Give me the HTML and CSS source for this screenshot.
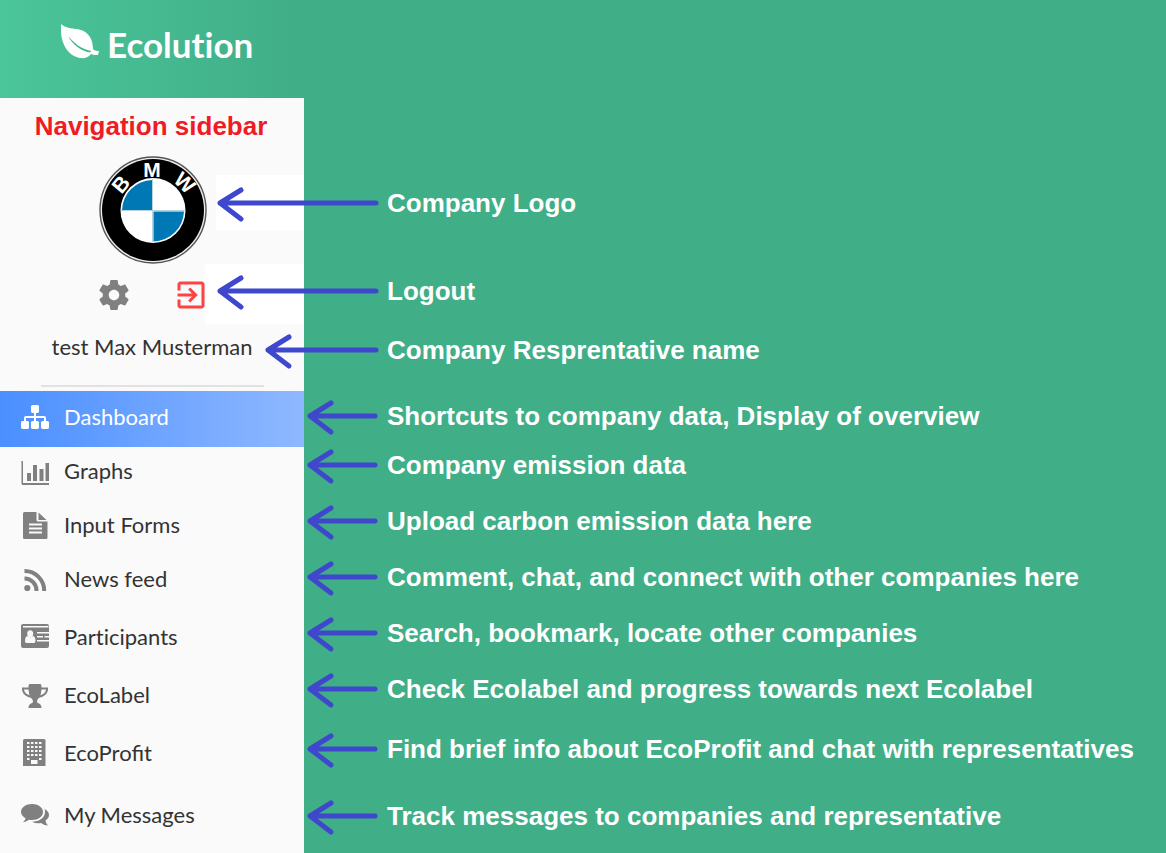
FILE: index.html
```html
<!DOCTYPE html>
<html lang="en">
<head>
<meta charset="utf-8">
<meta name="viewport" content="width=device-width, initial-scale=1">
<title>Ecolution – Navigation sidebar</title>
<link rel="stylesheet" href="styles.css">
</head>
<body>
<svg width="0" height="0" class="defs" aria-hidden="true">
  <symbol id="arrow" viewBox="0 0 74 34" overflow="visible"><path d="M26 4 5 17 26 33M5 17H70" /></symbol>
</svg>
<header class="header">
  <div class="brand">
    <svg class="leaf" viewBox="0 0 38 35" aria-hidden="true">
      <path fill="#fff" d="M0 0C5 5 13 4 20 6C27 8 32 15 32 25C34 27 36 27 38 27L37 31C34 31 32 31 30 30C27 34 23 34.500 19 34C8 32 0 21 0 6Z"/>
      <path fill="#43b58d" d="M7 12C13 19 20 25 30 27L29 28.500C20 27 12 21 7 12Z"/>
    </svg>
    <span class="brand-name">Ecolution</span>
  </div>
</header>
<main class="page">
  <aside class="sidebar">
    <h1 class="title">Navigation sidebar</h1>
    <div class="logo-row">
      <svg class="logo" viewBox="0 0 108 108" role="img" aria-label="BMW">
        <circle cx="54" cy="54" r="53" fill="#eee" stroke="#555" stroke-width="1.400"/>
        <circle cx="54" cy="54" r="51" fill="#000"/>
        <circle cx="54" cy="54.500" r="32.500" fill="#fff"/>
        <path fill="#0078b5" d="M53 54V24A31 31 0 0 0 23 54ZM54.500 55.500H85A31 31 0 0 1 54.500 85.500Z"/>
        <path stroke="#b8d3e0" d="M53.500 23V86M22 54.500H86"/>
        <g class="logo-letters">
          <text x="53" y="21">M</text>
          <text transform="translate(22 28.500) rotate(-50)" y="7">B</text>
          <text transform="translate(85.500 27) rotate(43)" y="7">W</text>
        </g>
      </svg>
      <span class="patch patch-logo"></span>
    </div>
    <div class="actions">
      <button class="icon-button" type="button" aria-label="Settings">
        <svg viewBox="0 0 24 24" fill="#808080"><path d="M19.430 12.980c.04-.32.07-.64.07-.98s-.03-.66-.07-.98l2.110-1.650c.19-.15.24-.42.12-.64l-2-3.460c-.12-.22-.39-.3-.61-.22l-2.490 1c-.52-.4-1.080-.73-1.690-.98l-.38-2.650C14.460 2.180 14.250 2 14 2h-4c-.25 0-.46.18-.49.42l-.38 2.650c-.61.25-1.170.59-1.690.98l-2.490-1c-.23-.09-.49 0-.61.22l-2 3.460c-.13.22-.07.49.12.64l2.110 1.650c-.04.32-.07.65-.07.98s.03.66.07.98l-2.110 1.650c-.19.15-.24.42-.12.64l2 3.460c.12.22.39.3.61.22l2.490-1c.52.4 1.080.73 1.690.98l.38 2.650c.03.24.24.42.49.42h4c.25 0 .46-.18.49-.42l.38-2.650c.61-.25 1.170-.59 1.690-.98l2.490 1c.23.09.49 0 .61-.22l2-3.460c.12-.22.07-.49-.12-.64l-2.110-1.650zM12 15.500c-1.930 0-3.500-1.570-3.500-3.500s1.570-3.500 3.500-3.500 3.500 1.570 3.500 3.500-1.570 3.500-3.500 3.500z"/></svg>
      </button>
      <button class="icon-button" type="button" aria-label="Logout">
        <svg viewBox="0 0 24 24" fill="#ff4343"><path d="M10.090 15.590L11.500 17l5-5-5-5-1.410 1.410L12.670 11H3v2h9.670l-2.580 2.590zM19 3H5c-1.110 0-2 .9-2 2v4h2V5h14v14H5v-4H3v4c0 1.100.89 2 2 2h14c1.100 0 2-.9 2-2V5c0-1.100-.9-2-2-2z"/></svg>
      </button>
      <span class="patch patch-logout"></span>
    </div>
    <p class="user">test Max Musterman</p>
    <hr class="divider">
    <nav class="nav">
      <a class="item active" href="#dashboard">
        <svg viewBox="0 0 1792 1792"><path d="M1792 1248v320q0 40-28 68t-68 28h-320q-40 0-68-28t-28-68v-320q0-40 28-68t68-28h96v-192h-512v192h96q40 0 68 28t28 68v320q0 40-28 68t-68 28h-320q-40 0-68-28t-28-68v-320q0-40 28-68t68-28h96v-192h-512v192h96q40 0 68 28t28 68v320q0 40-28 68t-68 28h-320q-40 0-68-28t-28-68v-320q0-40 28-68t68-28h96v-192q0-52 38-90t90-38h512v-192h-96q-40 0-68-28t-28-68v-320q0-40 28-68t68-28h320q40 0 68 28t28 68v320q0 40-28 68t-68 28h-96v192h512q52 0 90 38t38 90v192h96q40 0 68 28t28 68z"/></svg>
        Dashboard</a>
      <a class="item gap-xs" href="#graphs">
        <svg viewBox="0 0 28 28"><path d="M.500 4H2V26H28V28H2Q.500 28 .500 26.500ZM6 16h4v8h-4zM12 8h4v16h-4zM18.500 12h4v12h-4zM24.500 6h3.500v18h-3.500z"/></svg>
        Graphs</a>
      <a class="item gap-s" href="#forms">
        <svg viewBox="0 0 28 28"><path d="M3.500 1H15.500V9Q15.500 10.500 17 10.500H26.500V26.500Q26.500 28 25 28H3.500Q2 28 2 26.500V2.500Q2 1 3.500 1ZM17.500 1.500 25.500 9H17.500Z"/><path class="cut" d="M8 12.500h13v2h-13zM8 16.500h13v2h-13zM8 20.500h13v2h-13z"/></svg>
        Input Forms</a>
      <a class="item gap-s" href="#news">
        <svg viewBox="0 0 28 28"><circle cx="6.300" cy="23" r="3.100"/><path class="line rss" d="M3.500 13.500A12 12 0 0 1 15.500 26M3.500 6A19.700 19.700 0 0 1 23.200 26"/></svg>
        News feed</a>
      <a class="item gap-m plain" href="#participants">
        <svg viewBox="0 0 28 28"><path d="M2 1H26Q28 1 28 3V23Q28 25 26 25H2Q0 25 0 23V3Q0 1 2 1Z"/><path class="cut" d="M2 3H27.500V4.500H2ZM16 9H28V10.500H16ZM16 13H22V14.500H16ZM23.500 13H28V14.500H23.500ZM16 17H28V18.500H16Z"/><ellipse class="cut" cx="9.200" cy="10.800" rx="3" ry="3.500"/><path class="cut" d="M6.500 13Q9 15.500 12 13Q14.500 13.500 14.500 18Q14.500 20 13 20H5.500Q4 20 4 18Q4 13.500 6.500 13Z"/></svg>
        Participants</a>
      <a class="item gap-m" href="#ecolabel">
        <svg viewBox="0 0 28 28"><path d="M9 3H19Q20.500 3 20.500 5C20.500 11 20 15 17 18Q16 19 16 20.500Q16 22 18 22.500Q20.500 23.500 20.500 27H7.500Q7.500 23.500 10 22.500Q12 22 12 20.500Q12 19 11 18C8 15 7.500 11 7.500 5Q7.500 3 9 3Z"/><path class="line" d="M8 7.500H2V9Q3 14.500 11 16M20 7.500H26V9Q25 14.500 17 16"/></svg>
        EcoLabel</a>
      <a class="item gap-m" href="#ecoprofit">
        <svg viewBox="0 0 28 28"><path d="M3.500 0H23Q24.500 0 24.500 1.500V27H2V1.500Q2 0 3.500 0Z"/><path class="windows" d="M6 4H21M6 8H21M6 12H21M6 16H21"/><path class="cut" d="M6 19h2.500v2h-2.500zM18 19h2.500v2h-2.500zM10 21h6.500v4h-6.500z"/></svg>
        EcoProfit</a>
      <a class="item gap-l" href="#messages">
        <svg viewBox="0 0 28 28"><path d="M11 3C17 3 22 6.500 22 11S17 19 11 19Q9.500 19 8 18.700Q5 21 2 21.200Q4.500 19 4.600 17.300C2 16 0 13.500 0 11C0 6.500 5 3 11 3ZM23.500 8C26.500 9.500 28 11.500 28 14Q28 17 24.500 19.500Q24.500 22 27 24.500Q23.500 24.500 20 22Q15 23 11 20.700C18 20.700 24 17 24 11Q24 9.500 23.500 8Z"/></svg>
        My Messages</a>
    </nav>
  </aside>
  <ul class="notes">
    <li class="note"><svg class="arrow" viewBox="0 0 164 34"><path d="M26 4 5 17 26 33M5 17H161"/></svg>Company Logo</li>
    <li class="note"><svg class="arrow" viewBox="0 0 164 34"><path d="M26 4 5 17 26 33M5 17H161"/></svg>Logout</li>
    <li class="note"><svg class="arrow arrow-medium" viewBox="0 0 116 34"><path d="M26 4 5 17 26 33M5 17H113"/></svg>Company Resprentative name</li>
    <li class="note"><svg class="arrow arrow-short"><use href="#arrow"/></svg>Shortcuts to company data, Display of overview</li>
    <li class="note"><svg class="arrow arrow-short"><use href="#arrow"/></svg>Company emission data</li>
    <li class="note"><svg class="arrow arrow-short"><use href="#arrow"/></svg>Upload carbon emission data here</li>
    <li class="note"><svg class="arrow arrow-short"><use href="#arrow"/></svg>Comment, chat, and connect with other companies here</li>
    <li class="note"><svg class="arrow arrow-short"><use href="#arrow"/></svg>Search, bookmark, locate other companies</li>
    <li class="note"><svg class="arrow arrow-short"><use href="#arrow"/></svg>Check Ecolabel and progress towards next Ecolabel</li>
    <li class="note"><svg class="arrow arrow-short"><use href="#arrow"/></svg>Find brief info about EcoProfit and chat with representatives</li>
    <li class="note"><svg class="arrow arrow-short"><use href="#arrow"/></svg>Track messages to companies and representative</li>
  </ul>
</main>
</body>
</html>
```
FILE: styles.css
```css
* { box-sizing: border-box; }

body {
  margin: 0;
  min-height: 100vh;
  display: flex;
  flex-direction: column;
  background: #40ae87;
  font-family: "Liberation Sans", Arial, sans-serif;
}

.defs { position: absolute; }

.header {
  height: 98px;
  background: linear-gradient(90deg, #4bc59a, #40ae87 304px);
}

.brand {
  display: flex;
  align-items: flex-start;
  gap: 8px;
  padding: 24px 0 0 61px;
  color: #fff;
}

.leaf { width: 38px; height: 35px; }

.brand-name {
  font: 700 35px/40px Lato, sans-serif;
  font-variant-ligatures: none;
}

.page {
  flex: 1;
  display: grid;
  grid-template-columns: 304px 1fr;
}

.sidebar {
  background: #fafafa;
  padding-top: 13px;
}

.title {
  margin: 0;
  padding-right: 2px;
  color: #ee1c25;
  font-size: 26px;
  line-height: 30px;
  text-align: center;
}

.logo-row,
.actions {
  position: relative;
  display: flex;
  justify-content: center;
}

.logo-row {
  margin-top: 15px;
  padding-left: 1px;
}

.logo { width: 108px; height: 108px; }

.logo-letters {
  fill: #fff;
  font-size: 21px;
  font-weight: 700;
  text-anchor: middle;
}

.patch {
  position: absolute;
  right: 0;
  background: #fff;
}

.patch-logo { top: 19px; width: 88px; height: 55px; }
.patch-logout { top: -13px; width: 99px; height: 60px; }

.actions {
  gap: 41px;
  margin-top: 13px;
}

.icon-button {
  width: 36px;
  height: 36px;
  padding: 0;
  border: 0;
  background: none;
}

.icon-button svg { display: block; }

.user {
  margin: 20px 0 24px;
  color: #333;
  font: 22px/28px Lato, sans-serif;
  text-align: center;
}

.divider {
  width: 223px;
  height: 2px;
  margin: 0 auto 4px;
  border: 0;
  background: #e2e2e2;
}

.nav {
  display: flex;
  flex-direction: column;
}

.item {
  display: flex;
  align-items: center;
  gap: 15px;
  height: 40px;
  padding-left: 21px;
  color: #333;
  font: 22px/28px Lato, sans-serif;
  text-decoration: none;
}

.item svg {
  width: 28px;
  height: 28px;
  fill: #808080;
}

.item .cut { fill: #fafafa; }
.item .line { fill: none; stroke: #808080; stroke-width: 2; }
.item .rss { stroke-width: 4; }
.item .windows { stroke: #fafafa; stroke-width: 2; stroke-dasharray: 2.5 1.5; }

.item.plain { font-variant-ligatures: none; }

.item.active {
  height: 56px;
  padding-bottom: 4px;
  color: #fff;
  background: linear-gradient(90deg, #4a8fff, #8fb8ff);
}

.item.active svg { fill: #fff; }

.gap-xs { margin-top: 4px; }
.gap-s { margin-top: 14px; }
.gap-m { margin-top: 18px; }
.gap-l { margin-top: 22px; }

.notes {
  position: relative;
  margin: 0;
  padding: 88px 0 0;
  list-style: none;
  color: #fff;
  font-size: 26px;
  font-weight: 700;
}

.note {
  display: grid;
  grid-template-columns: 75px 1fr;
  column-gap: 8px;
  align-items: center;
  margin-bottom: 22px;
  line-height: 34px;
}

.note:nth-child(1) { margin-bottom: 54px; }
.note:nth-child(2) { margin-bottom: 25px; }
.note:nth-child(3) { margin-bottom: 32px; }
.note:nth-child(4) { margin-bottom: 15px; }
.note:nth-child(9) { margin-bottom: 26px; }
.note:nth-child(10) { margin-bottom: 33px; }
.note:last-child { margin-bottom: 0; }

.arrow {
  justify-self: end;
  width: 164px;
  height: 34px;
  overflow: visible;
  fill: none;
  stroke: #3f48cc;
  stroke-width: 5;
  stroke-linecap: round;
  stroke-linejoin: round;
}

.arrow-medium { width: 116px; }
.arrow-short { width: 74px; }
```
